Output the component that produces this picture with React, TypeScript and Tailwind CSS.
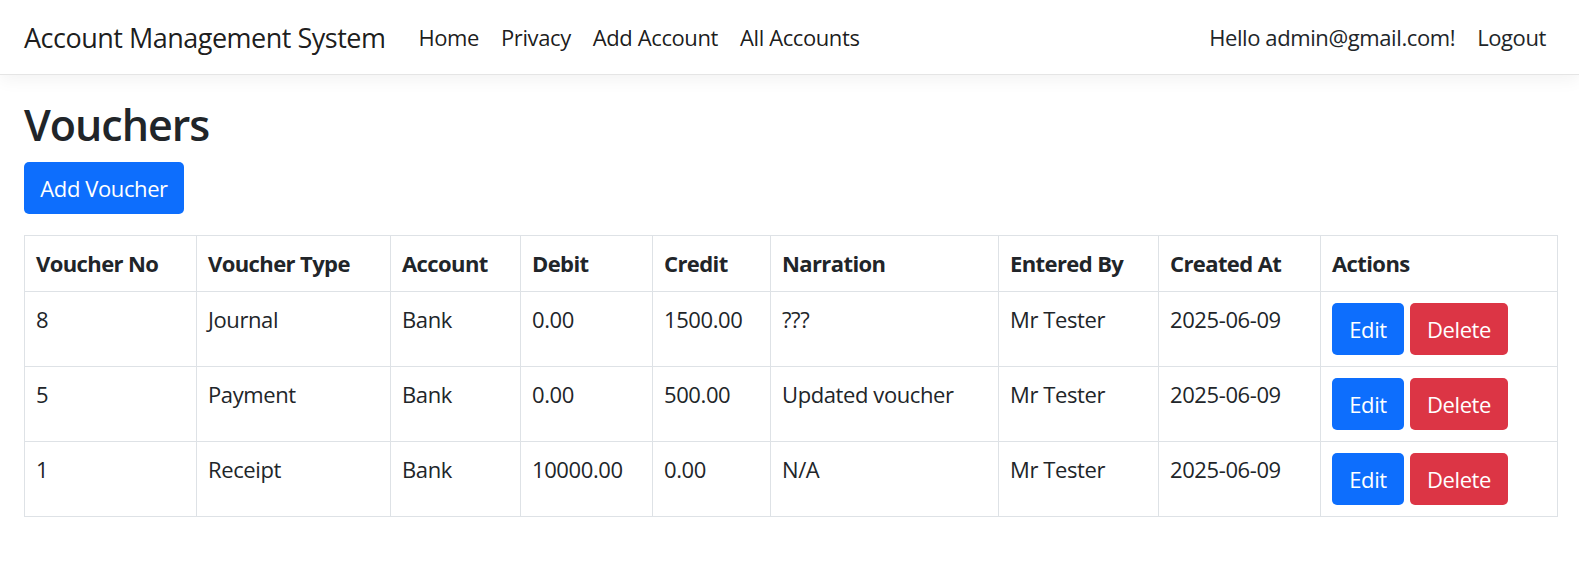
import React from 'react'

interface Voucher {
  no: string
  type: string
  account: string
  debit: string
  credit: string
  narration: string
  enteredBy: string
  createdAt: string
}

const vouchers: Voucher[] = [
  { no: '8', type: 'Journal', account: 'Bank', debit: '0.00', credit: '1500.00', narration: '???', enteredBy: 'Mr Tester', createdAt: '2025-06-09' },
  { no: '5', type: 'Payment', account: 'Bank', debit: '0.00', credit: '500.00', narration: 'Updated voucher', enteredBy: 'Mr Tester', createdAt: '2025-06-09' },
  { no: '1', type: 'Receipt', account: 'Bank', debit: '10000.00', credit: '0.00', narration: 'N/A', enteredBy: 'Mr Tester', createdAt: '2025-06-09' },
]

const headers = [
  { label: 'Voucher No', w: 'w-[172px]' },
  { label: 'Voucher Type', w: 'w-[194px]' },
  { label: 'Account', w: 'w-[130px]' },
  { label: 'Debit', w: 'w-[132px]' },
  { label: 'Credit', w: 'w-[118px]' },
  { label: 'Narration', w: 'w-[228px]' },
  { label: 'Entered By', w: 'w-[160px]' },
  { label: 'Created At', w: 'w-[162px]' },
  { label: 'Actions', w: 'w-[237px]' },
]

const cell = 'border border-[#dee2e6] px-[11px] py-[11px] align-top text-left'

export default function App() {
  return (
    <div className="min-h-[577px] bg-white font-['Open_Sans',sans-serif] text-[22px] leading-[33px] tracking-[-0.4px] text-[#212529]">
      {/* Navbar */}
      <nav className="h-[75px] border-b border-[#e5e5e5] bg-white shadow-[0_5px_16px_rgba(0,0,0,0.05)]">
        <div className="flex h-full items-center pl-[24px] pr-[22px]">
          <a className="mr-[22px] text-[27px] leading-[41px] tracking-[-0.5px] text-[rgba(0,0,0,0.9)]">Account Management System</a>
          <ul className="flex">
            {['Home', 'Privacy', 'Add Account', 'All Accounts'].map((l) => (
              <li key={l}>
                <a className="block px-[11px] text-[rgba(0,0,0,0.9)]">{l}</a>
              </li>
            ))}
          </ul>
          <ul className="ml-auto flex">
            <li>
              <a className="block px-[11px] text-[#212529]">Hello admin@gmail.com!</a>
            </li>
            <li>
              <a className="block px-[11px] text-[#212529]">Logout</a>
            </li>
          </ul>
        </div>
      </nav>

      {/* Main */}
      <main className="pl-[24px] pr-[22px] pt-[24px]">
        <h2 className="mb-[11px] text-[43px] font-semibold leading-[52px] tracking-[-1px]">Vouchers</h2>
        <button className="h-[52px] w-[160px] rounded-[5px] bg-[#0d6efd] text-white">Add Voucher</button>

        <table className="mt-[21px] w-[1533px] table-fixed border-collapse">
          <thead>
            <tr>
              {headers.map((h) => (
                <th key={h.label} className={`${cell} ${h.w} font-bold tracking-[-0.6px]`}>
                  {h.label}
                </th>
              ))}
            </tr>
          </thead>
          <tbody>
            {vouchers.map((v) => (
              <tr key={v.no}>
                <td className={cell}>{v.no}</td>
                <td className={cell}>{v.type}</td>
                <td className={cell}>{v.account}</td>
                <td className={cell}>{v.debit}</td>
                <td className={cell}>{v.credit}</td>
                <td className={cell}>{v.narration}</td>
                <td className={cell}>{v.enteredBy}</td>
                <td className={cell}>{v.createdAt}</td>
                <td className={cell}>
                  <div className="flex gap-[6px]">
                    <button className="h-[52px] w-[72px] rounded-[5px] bg-[#0d6efd] text-white">Edit</button>
                    <button className="h-[52px] w-[98px] rounded-[5px] bg-[#dc3545] text-white">Delete</button>
                  </div>
                </td>
              </tr>
            ))}
          </tbody>
        </table>
      </main>
    </div>
  )
}
